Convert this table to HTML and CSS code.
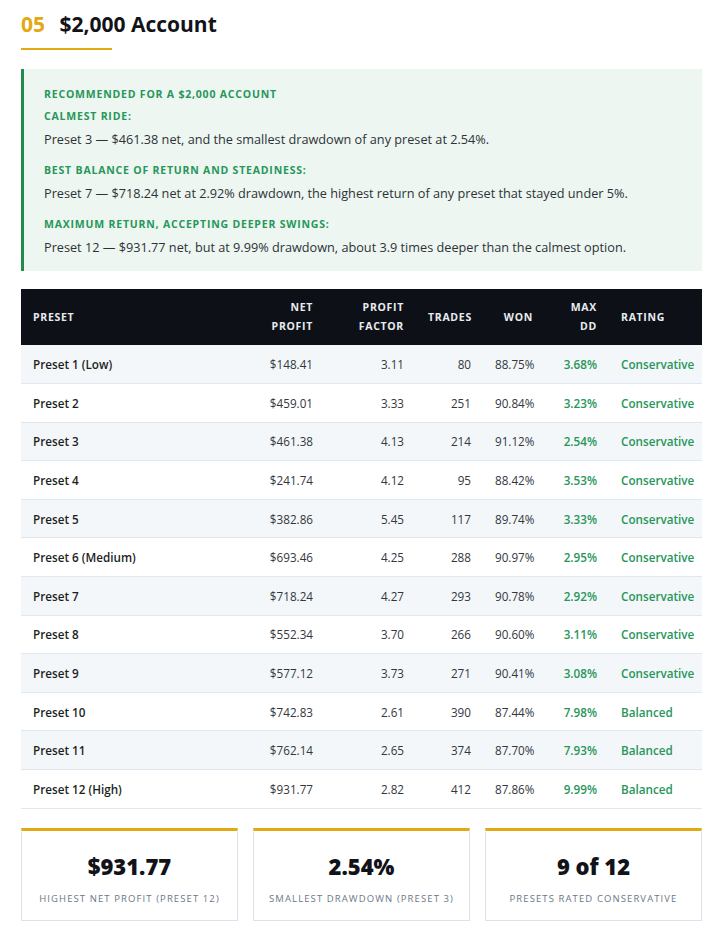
FILE: index.html
```html
<!DOCTYPE html>
<html lang="en">
<head>
<meta charset="utf-8">
<title>$2,000 Account</title>
<link rel="stylesheet" href="styles.css">
</head>
<body>
<div class="page">
  <h2 class="section-title"><span class="num">05</span> $2,000 Account</h2>
  <div class="title-rule"></div>

  <div class="callout">
    <div class="callout-head">Recommended for a $2,000 account</div>
    <div class="label">Calmest ride:</div>
    <p class="text">Preset 3 — $461.38 net, and the smallest drawdown of any preset at 2.54%.</p>
    <div class="label gap">Best balance of return and steadiness:</div>
    <p class="text">Preset 7 — $718.24 net at 2.92% drawdown, the highest return of any preset that stayed under 5%.</p>
    <div class="label gap">Maximum return, accepting deeper swings:</div>
    <p class="text">Preset 12 — $931.77 net, but at 9.99% drawdown, about 3.9 times deeper than the calmest option.</p>
  </div>

  <table class="results">
    <colgroup>
      <col class="c-preset"><col class="c-net"><col class="c-pf"><col class="c-trades"><col class="c-won"><col class="c-dd"><col class="c-rating">
    </colgroup>
    <thead>
      <tr>
        <th class="left">Preset</th>
        <th>Net<br>Profit</th>
        <th>Profit<br>Factor</th>
        <th>Trades</th>
        <th>Won</th>
        <th>Max<br>DD</th>
        <th class="left">Rating</th>
      </tr>
    </thead>
    <tbody>
      <tr><td class="name">Preset 1 (Low)</td><td>$148.41</td><td>3.11</td><td>80</td><td>88.75%</td><td class="green">3.68%</td><td class="rating">Conservative</td></tr>
      <tr><td class="name">Preset 2</td><td>$459.01</td><td>3.33</td><td>251</td><td>90.84%</td><td class="green">3.23%</td><td class="rating">Conservative</td></tr>
      <tr><td class="name">Preset 3</td><td>$461.38</td><td>4.13</td><td>214</td><td>91.12%</td><td class="green">2.54%</td><td class="rating">Conservative</td></tr>
      <tr><td class="name">Preset 4</td><td>$241.74</td><td>4.12</td><td>95</td><td>88.42%</td><td class="green">3.53%</td><td class="rating">Conservative</td></tr>
      <tr><td class="name">Preset 5</td><td>$382.86</td><td>5.45</td><td>117</td><td>89.74%</td><td class="green">3.33%</td><td class="rating">Conservative</td></tr>
      <tr><td class="name">Preset 6 (Medium)</td><td>$693.46</td><td>4.25</td><td>288</td><td>90.97%</td><td class="green">2.95%</td><td class="rating">Conservative</td></tr>
      <tr><td class="name">Preset 7</td><td>$718.24</td><td>4.27</td><td>293</td><td>90.78%</td><td class="green">2.92%</td><td class="rating">Conservative</td></tr>
      <tr><td class="name">Preset 8</td><td>$552.34</td><td>3.70</td><td>266</td><td>90.60%</td><td class="green">3.11%</td><td class="rating">Conservative</td></tr>
      <tr><td class="name">Preset 9</td><td>$577.12</td><td>3.73</td><td>271</td><td>90.41%</td><td class="green">3.08%</td><td class="rating">Conservative</td></tr>
      <tr><td class="name">Preset 10</td><td>$742.83</td><td>2.61</td><td>390</td><td>87.44%</td><td class="green">7.98%</td><td class="rating">Balanced</td></tr>
      <tr><td class="name">Preset 11</td><td>$762.14</td><td>2.65</td><td>374</td><td>87.70%</td><td class="green">7.93%</td><td class="rating">Balanced</td></tr>
      <tr><td class="name">Preset 12 (High)</td><td>$931.77</td><td>2.82</td><td>412</td><td>87.86%</td><td class="green">9.99%</td><td class="rating">Balanced</td></tr>
    </tbody>
  </table>

  <div class="stats">
    <div class="stat"><div class="stat-value">$931.77</div><div class="stat-label">Highest net profit (Preset 12)</div></div>
    <div class="stat"><div class="stat-value">2.54%</div><div class="stat-label">Smallest drawdown (Preset 3)</div></div>
    <div class="stat"><div class="stat-value">9 of 12</div><div class="stat-label">Presets rated conservative</div></div>
  </div>
</div>
</body>
</html>
```

FILE: styles.css
```css
* { box-sizing: border-box; }
html, body { margin: 0; padding: 0; background: #ffffff; }
body {
  font-family: "Open Sans", "Noto Sans", "Liberation Sans", sans-serif;
  color: #2b2f36;
}
.page {
  width: 681px;
  margin-left: 21px;
}
.section-title {
  margin: 10px 0 0;
  font-size: 21px;
  line-height: 28px;
  font-weight: 700;
  color: #111318;
}
.section-title .num {
  color: #e2a912;
  margin-right: 9px;
}
.title-rule {
  width: 91px;
  height: 2px;
  margin-top: 10px;
  background: #e2a912;
}
.callout {
  margin-top: 19px;
  background: #edf6f0;
  border-left: 3px solid #23894f;
  padding: 17px 20px 14px 20px;
}
.callout-head, .label {
  font-size: 10.5px;
  line-height: 16px;
  font-weight: 700;
  letter-spacing: 0.8px;
  text-transform: uppercase;
  color: #27965a;
}
.label { margin-top: 6px; }
.label.gap { margin-top: 13px; }
.text {
  margin: 5px 0 0;
  font-size: 12.7px;
  line-height: 20px;
  color: #2e3238;
}
.results {
  margin-top: 18px;
  width: 681px;
  border-collapse: collapse;
  table-layout: fixed;
  font-size: 11.7px;
}
.c-preset { width: 234px; }
.c-net { width: 70px; }
.c-pf { width: 91px; }
.c-trades { width: 67px; }
.c-won { width: 62px; }
.c-dd { width: 64px; }
.c-rating { width: 93px; }
.results thead tr { background: #0d1117; }
.results th {
  color: #e8ebef;
  font-size: 10.5px;
  line-height: 19px;
  font-weight: 700;
  letter-spacing: 0.7px;
  text-transform: uppercase;
  text-align: right;
  padding: 9px 12px;
  height: 56px;
}
.results th.left { text-align: left; }
.results td {
  padding: 0 12px;
  height: 38.6px;
  text-align: right;
  border-bottom: 1px solid #e1e7ee;
  color: #33373d;
  white-space: nowrap;
}
.results tbody tr:nth-child(odd) { background: #f4f7f9; }
.results td.name {
  text-align: left;
  font-weight: 600;
  color: #1c1f24;
}
.results td.green { color: #27965a; font-weight: 600; }
.results td.rating {
  text-align: left;
  color: #27965a;
  font-weight: 600;
}
.stats {
  margin-top: 19px;
  display: grid;
  grid-template-columns: repeat(3, 1fr);
  gap: 15px;
}
.stat {
  height: 93px;
  border: 1px solid #dde3ec;
  border-top: 3px solid #e2a912;
  text-align: center;
  padding-top: 21px;
}
.stat-value {
  font-size: 22px;
  line-height: 28px;
  font-weight: 800;
  color: #111318;
}
.stat-label {
  margin-top: 12px;
  font-size: 9.5px;
  line-height: 14px;
  letter-spacing: 1.1px;
  text-transform: uppercase;
  color: #6b7788;
}
```
